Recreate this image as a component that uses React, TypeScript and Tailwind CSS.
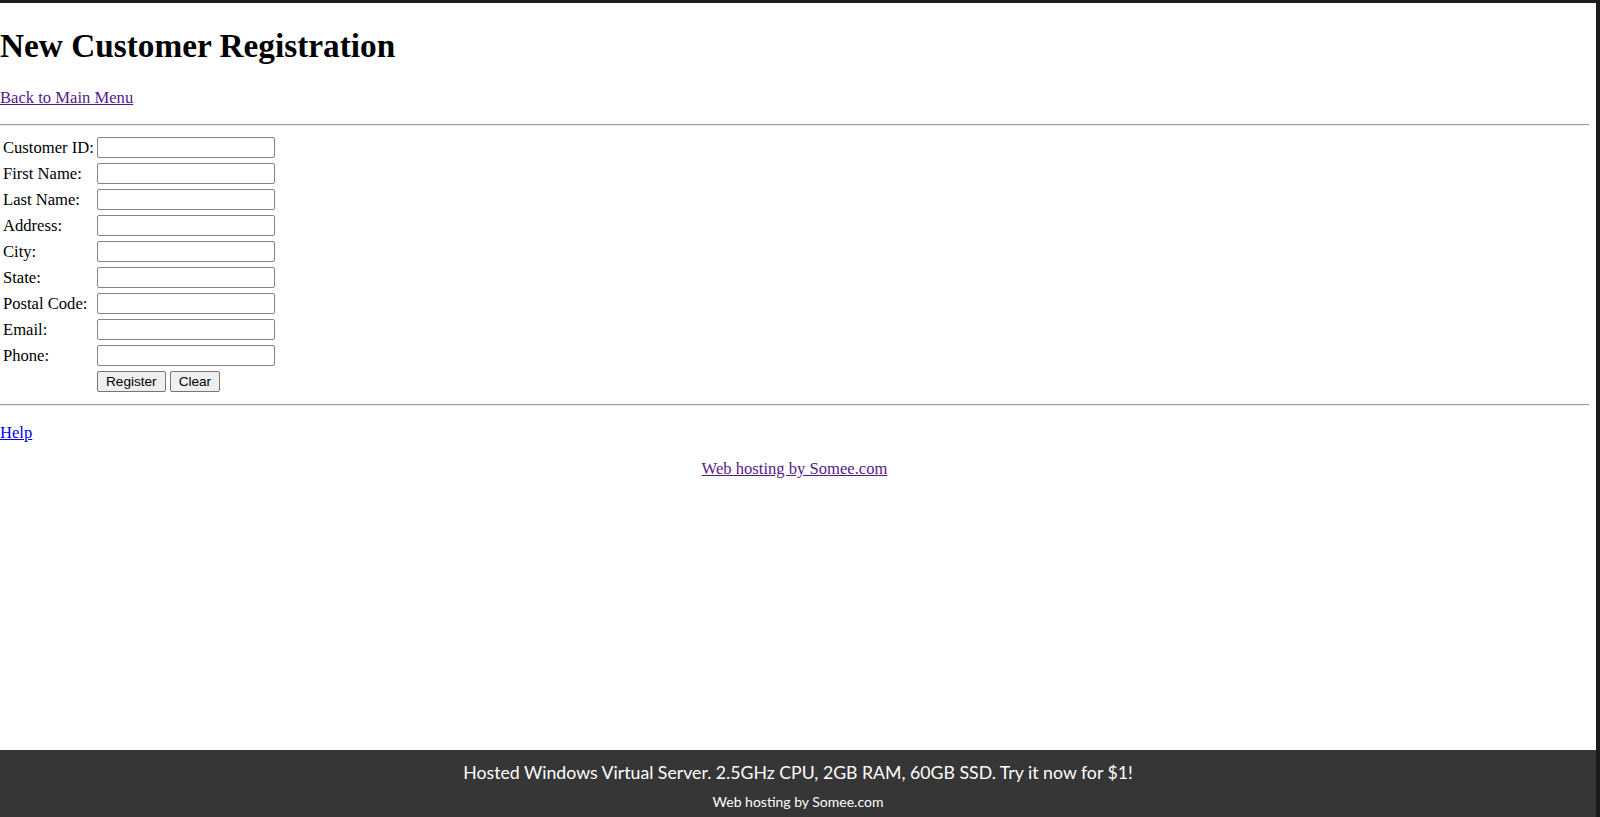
import React from "react";

const fields = [
  "Customer ID:",
  "First Name:",
  "Last Name:",
  "Address:",
  "City:",
  "State:",
  "Postal Code:",
  "Email:",
  "Phone:",
];

export default function App() {
  return (
    <div className="flex h-[817px] flex-col overflow-hidden border-t-[3px] border-r-[4px] border-[#1c1c1c] bg-white text-black [font-family:'Liberation_Serif',serif]">
      <div className="flex-1 pr-[7px]">
        <h1 className="mt-[25px] text-[33.3px] font-bold leading-[36px]">New Customer Registration</h1>

        <div className="mt-[25px] text-[16.6px] leading-[18px]">
          <a href="#" className="text-[#551a8b] underline">Back to Main Menu</a>
        </div>

        <hr className="mt-[17px] border-t border-b border-t-[#9a9a9a] border-b-[#eeeeee]" />

        <form className="mt-[11px] grid grid-cols-[97px_auto] justify-start gap-y-[5px]" onSubmit={(e) => e.preventDefault()}>
          {fields.map((label) => (
            <React.Fragment key={label}>
              <label className="flex h-[21px] items-center pl-[3px] text-[16.6px] leading-[18px]">{label}</label>
              <input
                type="text"
                className="h-[21px] w-[178px] rounded-[2px] border border-[#858585] bg-white px-[2px] text-[13.33px] [font-family:'Liberation_Sans',sans-serif]"
              />
            </React.Fragment>
          ))}
          <div />
          <div className="flex gap-[4px]">
            <button type="submit" className="h-[21px] rounded-[2px] border border-[#767676] bg-[#efefef] px-[8px] text-[13.6px] leading-[15px] text-black [font-family:'Liberation_Sans',sans-serif]">
              Register
            </button>
            <button type="reset" className="h-[21px] rounded-[2px] border border-[#767676] bg-[#efefef] px-[8px] text-[13.6px] leading-[15px] text-black [font-family:'Liberation_Sans',sans-serif]">
              Clear
            </button>
          </div>
        </form>

        <hr className="mt-[12px] border-t border-b border-t-[#9a9a9a] border-b-[#eeeeee]" />

        <div className="mt-[18px] text-[16.6px] leading-[18px]">
          <a href="#" className="text-[#0000ee] underline">Help</a>
        </div>

        <div className="mt-[18px] text-center text-[16.6px] leading-[18px]">
          <a href="#" className="text-[#551a8b] underline">Web hosting by Somee.com</a>
        </div>
      </div>

      <footer className="flex h-[67px] shrink-0 flex-col items-center bg-[#363636] pt-[11px] text-white [font-family:Lato,sans-serif]">
        <div className="text-[17.7px] leading-[24px]">
          Hosted Windows Virtual Server. 2.5GHz CPU, 2GB RAM, 60GB SSD. Try it now for $1!
        </div>
        <div className="mt-[8px] text-[14px] leading-[18px]">Web hosting by Somee.com</div>
      </footer>
    </div>
  );
}
